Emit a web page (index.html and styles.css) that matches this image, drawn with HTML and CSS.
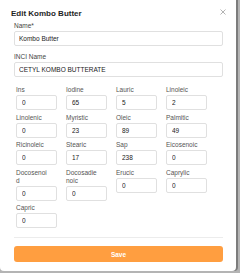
FILE: index.html
```html
<!DOCTYPE html>
<html lang="en">
  <head>
    <meta charset="UTF-8" />
    <title>Edit Kombo Butter</title>
    <link rel="stylesheet" href="styles.css">
  </head>
  <body>
    <div class="modal">
      <div class="modal-header">
        <h2 class="modal-title">Edit Kombo Butter</h2>
        <button type="button" class="close-btn" aria-label="Close">
          <svg width="6" height="6" viewBox="0 0 6 6">
            <path d="M0.5 0.5 L5.5 5.5 M5.5 0.5 L0.5 5.5" stroke="#a0a0a0" stroke-width="0.8" fill="none" />
          </svg>
        </button>
      </div>

      <form class="modal-body">
        <div class="field">
          <label for="name">Name*</label>
          <input id="name" class="text-input" type="text" value="Kombo Butter" />
        </div>
        <div class="field field-last">
          <label for="inci">INCI Name</label>
          <input id="inci" class="text-input" type="text" value="CETYL KOMBO BUTTERATE" />
        </div>

        <div class="acid-grid">
          <div class="cell"><label>Ins</label><input class="num-input" value="0" /></div>
          <div class="cell"><label>Iodine</label><input class="num-input" value="65" /></div>
          <div class="cell"><label>Lauric</label><input class="num-input" value="5" /></div>
          <div class="cell"><label>Linoleic</label><input class="num-input" value="2" /></div>
          <div class="cell"><label>Linolenic</label><input class="num-input" value="0" /></div>
          <div class="cell"><label>Myristic</label><input class="num-input" value="23" /></div>
          <div class="cell"><label>Oleic</label><input class="num-input" value="89" /></div>
          <div class="cell"><label>Palmitic</label><input class="num-input" value="49" /></div>
          <div class="cell"><label>Ricinoleic</label><input class="num-input" value="0" /></div>
          <div class="cell"><label>Stearic</label><input class="num-input" value="17" /></div>
          <div class="cell"><label>Sap</label><input class="num-input" value="238" /></div>
          <div class="cell"><label>Eicosenoic</label><input class="num-input" value="0" /></div>
          <div class="cell"><label>Docosenoid</label><input class="num-input" value="0" /></div>
          <div class="cell"><label>Docosadienoic</label><input class="num-input" value="0" /></div>
          <div class="cell"><label>Erucic</label><input class="num-input" value="0" /></div>
          <div class="cell"><label>Caprylic</label><input class="num-input" value="0" /></div>
          <div class="cell"><label>Capric</label><input class="num-input" value="0" /></div>
        </div>

        <hr class="divider" />
        <button type="submit" class="save-btn">Save</button>
      </form>
    </div>
  </body>
</html>
```

FILE: styles.css
```css
body {
  margin: 0;
  background-color: #b4b4b4;
  font-family: "Liberation Sans", Arial, sans-serif;
  color: #222;
}

.modal {
  width: 236px;
  height: 271px;
  box-sizing: border-box;
  padding: 9px 13px 0 14px;
  background-color: #fff;
  border-radius: 0 0 4px 4px;
  box-shadow: 2px 0 0 #7c7c7c;
}

.modal-header {
  display: flex;
  justify-content: space-between;
  align-items: center;
  height: 10px;
  margin-bottom: 3px;
}

.modal-title {
  margin: 0 0 0 -3px;
  font-size: 8px;
  font-weight: 700;
  line-height: 10px;
  color: #1f1f1f;
}

.close-btn {
  display: flex;
  padding: 0;
  margin: -4px -3px 0 0;
  border: none;
  background: none;
  cursor: pointer;
}

.field {
  margin-bottom: 7px;
}

.field-last {
  margin-bottom: 9px;
}

label {
  display: block;
  font-size: 6.5px;
  line-height: 8px;
  color: #444;
  margin-bottom: 1px;
}

.text-input,
.num-input {
  display: block;
  box-sizing: border-box;
  height: 15px;
  margin: 0;
  border: 1px solid #e0e0e0;
  border-radius: 2px;
  font-family: inherit;
  font-size: 6.5px;
  color: #222;
  outline: none;
}

.text-input {
  width: 209px;
  padding: 0 4px;
}

.acid-grid {
  display: grid;
  grid-template-columns: repeat(4, 50px);
  row-gap: 3.5px;
  margin-left: 2px;
}

.cell label {
  width: 34px;
  word-break: break-all;
  color: #555;
}

.num-input {
  width: 41px;
  padding: 0 5px;
}

.divider {
  margin: 9px 0 8px;
  border: none;
  border-top: 1px solid #ececec;
}

.save-btn {
  display: block;
  width: 209px;
  height: 16px;
  padding: 0;
  border: none;
  border-radius: 3px;
  background-color: #ff9e40;
  color: #fff;
  font-family: inherit;
  font-size: 6.5px;
  font-weight: 700;
  cursor: pointer;
}
```
